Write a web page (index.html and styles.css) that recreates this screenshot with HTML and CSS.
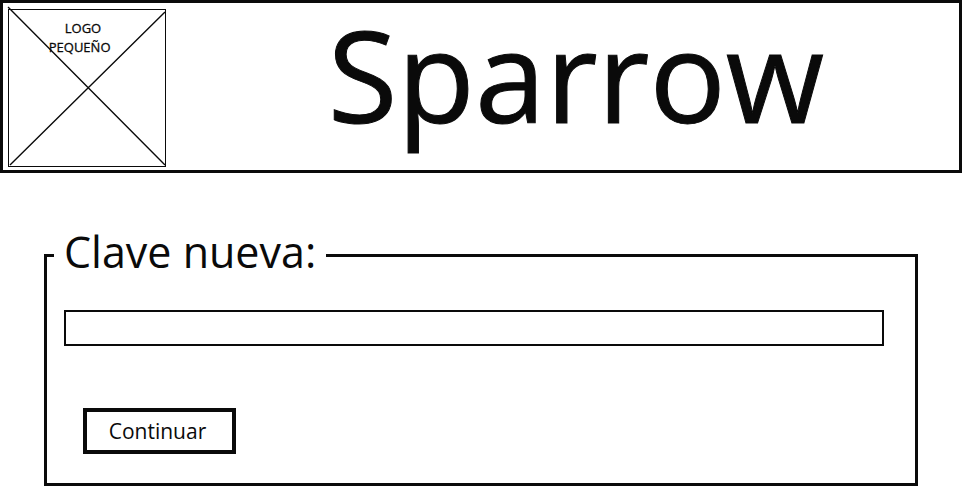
FILE: index.html
```html
<!DOCTYPE html>
<html lang="es">
<head>
<meta charset="utf-8">
<title>Sparrow</title>
<link rel="stylesheet" href="styles.css">
</head>
<body>
<header class="banner">
  <div class="logo">
    <svg class="logo-cross" viewBox="0 0 158 158" preserveAspectRatio="none" aria-hidden="true"><path d="M-1 -3L158 157M158 2L1 157"/></svg>
    <span class="logo-text">LOGO<br>PEQUEÑO&nbsp;&nbsp;</span>
  </div>
  <h1 class="title">Sparrow</h1>
</header>
<main class="content">
  <form>
    <fieldset class="panel">
      <legend class="legend"><label for="clave">Clave nueva:</label></legend>
      <input class="field" id="clave" type="password">
      <button class="submit" type="button">Continuar</button>
    </fieldset>
  </form>
</main>
</body>
</html>
```
FILE: styles.css
```css
* {
  box-sizing: border-box;
}

body {
  margin: 0;
  background: #fff;
  color: #0a0a0a;
  font-family: "Open Sans", "Noto Sans", sans-serif;
}

.banner {
  display: grid;
  grid-template-columns: 158px 1fr;
  padding: 6px 5px 3px;
  border: 3px solid #0a0a0a;
}

.logo {
  position: relative;
  height: 158px;
  border: 1px solid #0a0a0a;
}

.logo-cross {
  position: absolute;
  inset: 0;
  width: 100%;
  height: 100%;
  overflow: visible;
  fill: none;
  stroke: #0a0a0a;
  stroke-width: 1.4;
}

.logo-text {
  display: block;
  padding: 9px 8px 0 0;
  font-size: 13px;
  line-height: 19px;
  text-align: center;
  -webkit-text-stroke: 0.3px;
}

.title {
  margin: 0;
  padding-left: 32px;
  font-size: 127px;
  font-weight: 400;
  line-height: 130px;
  text-align: center;
  -webkit-text-stroke: 1px;
}

.content {
  padding: 55px 44px 0;
}

.panel {
  margin: 0;
  padding: 28px 31px 29px 17px;
  border: 3px solid #0a0a0a;
}

.legend {
  margin-left: -10px;
  padding: 0 10px 6px;
  font-size: 43px;
  line-height: 48px;
}

.field {
  display: block;
  width: 100%;
  height: 36px;
  padding: 0 8px;
  border: 2px solid #0a0a0a;
  border-radius: 0;
  background: #fff;
  font: inherit;
}

.submit {
  display: block;
  width: 153px;
  height: 46px;
  margin: 62px 0 0 19px;
  padding: 0 4px 0 0;
  border: 4px solid #0a0a0a;
  border-radius: 0;
  background: #fff;
  color: inherit;
  font: inherit;
  font-size: 21px;
}
```
